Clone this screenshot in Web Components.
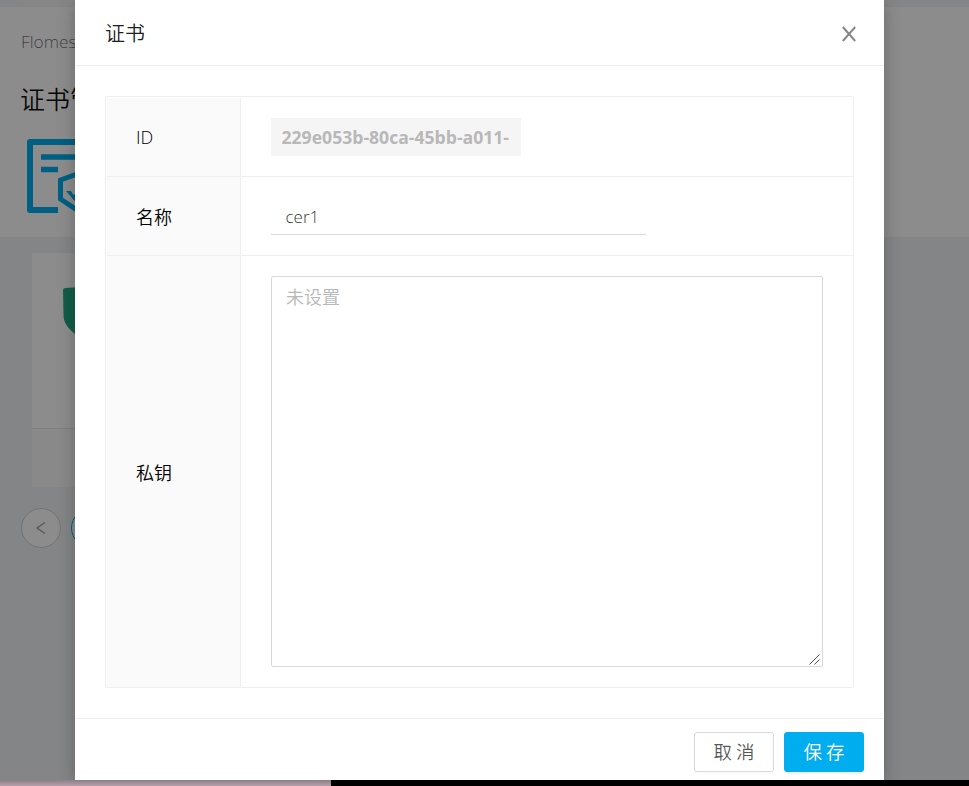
<!DOCTYPE html>
<html lang="zh-CN"><head><meta charset="utf-8"><title>证书</title>
<style>
html,body{margin:0;height:786px;overflow:hidden;background:#000}
body{font-family:"Open Sans","Noto Sans CJK SC",sans-serif;font-weight:350;font-size:18px;color:rgba(0,0,0,.9)}
</style></head><body>
<cert-app></cert-app>
<script>
const define=(name,html,setup)=>customElements.define(name,class extends HTMLElement{
  constructor(){super();this.attachShadow({mode:'open'}).innerHTML='<style>*{box-sizing:border-box}</style>'+html;}
  connectedCallback(){if(setup)setup(this,this.shadowRoot)}
});

define('cert-page',`<style>
:host{display:flex;flex-direction:column;height:780px;background:#f0f2f5;overflow:hidden}
.tabs{height:7px;flex:none;display:flex;padding-left:22px}
.tabs i{display:block;width:60px;height:6px;background:#f5f5f5}
header{height:230px;flex:none;background:#fff;padding:22px 21px 0}
.crumb{height:26px;line-height:26px;font-size:17.300px;color:rgba(0,0,0,.58)}
h1{font-size:25px;font-weight:350;line-height:36px;margin:26px 0 0 -1px;color:rgba(0,0,0,.95);white-space:nowrap}
.logo{display:block;margin:22px 0 0 6px}
main{padding:15px 21px 0 31px}
.card{width:330px;height:236px;background:#fff;border:1px solid #f1f1f1;border-radius:2px;display:flex;flex-direction:column}
.body{height:176px;padding:33px 0 0 31px;border-bottom:1px solid #e8e8e8}
.foot{flex:1;background:#fafafa}
nav{display:flex;gap:10px;margin:20px 0 0 -10px}
nav span{width:40px;height:40px;border:1px solid #d0d0d0;border-radius:50%;background:#fff;display:grid;place-items:center}
nav .on{border-color:#00adef}
svg{display:block}
</style>
<div class="tabs"><i></i></div>
<header><div class="crumb">Flomes</div><h1>证书管理</h1>
<svg class="logo" width="100" height="76" viewBox="0 0 100 76" fill="none" stroke="#00adef" stroke-width="6"><path d="M31 71H3V3H97V30" stroke-linejoin="round"/><path d="M14 18H80M14 30.500H31" stroke-width="5.500"/><path d="M33.500 41L56 33L79 41V60L56 75L33.500 60Z" stroke-width="5"/><path d="M39 52H44L47 57L52 52V57L47 61Z" fill="#00adef" stroke="none"/><path d="M46 60L62 46" stroke-width="5"/></svg></header>
<main><div class="card"><div class="body"><svg width="72" height="72" viewBox="0 0 72 72"><path d="M0 4Q0 2.300 2 2L34 0L68 3V25C68 45 53 58 34 64C11 48 .5 41 .5 29Z" fill="#22aa84"/></svg></div><div class="foot"></div></div>
<nav><span><svg width="12" height="14" viewBox="0 0 12 14" fill="none" stroke="#a0a0a0" stroke-width="1.400"><path d="M10 1.500L2 7L10 12.500"/></svg></span><span class="on"></span></nav></main>`);

define('desktop-strip',`<style>
:host{display:flex;height:6px;background:#000}
div{width:331px;background:linear-gradient(#8d7e86,#b3a0aa)}
</style><div></div>`);

define('form-row',`<style>
:host{display:grid;grid-template-columns:134px 1fr;border-bottom:1px solid #efefef}
:host(:last-child){border-bottom:0}
.label{background:#fafafa;border-right:1px solid #efefef;padding-left:29px;display:flex;align-items:center;font-size:18px;color:#000}
.value{padding:20px 30px;display:flex;align-items:center}
</style><div class="label"><span></span></div><div class="value"><slot></slot></div>`,
(h,r)=>{r.querySelector('span').textContent=h.getAttribute('label')});

define('id-field',`<style>
:host{display:block;width:250px;height:38px;background:#f5f5f5;padding:0 10.500px;font-size:17.600px;font-weight:700;line-height:38px;color:#b8b8b8}
div{overflow:hidden;white-space:nowrap}
</style><div><slot></slot></div>`);

define('text-field',`<style>
:host{display:block;width:375px;height:38px;border-bottom:1px solid #d9d9d9;padding:1px 0 0 14.500px;line-height:38px;font-size:17px;color:rgba(0,0,0,.85)}
</style><slot></slot>`);

define('text-box',`<style>
:host{display:flex;justify-content:space-between;width:552px;height:391px;border:1px solid #d9d9d9;border-radius:2px;padding:7px 2px 1px 14px;line-height:27px;color:#b8b8b8;font-size:18px}
svg{align-self:flex-end}
</style><slot></slot><svg width="11" height="11" viewBox="0 0 11 11" stroke="#555" stroke-width="1"><path d="M.5 10.500L10.500 .5M5.500 10.500L10.500 5.500"/></svg>`);

define('dialog-button',`<style>
:host{display:block;width:80px;height:40px;border:1px solid #d9d9d9;border-radius:3px;background:#fff;color:rgba(0,0,0,.68);box-shadow:0 2px 0 rgba(0,0,0,.016);text-align:center;line-height:38px;font-size:18.500px;letter-spacing:4px;text-indent:4px}
:host([primary]){background:#00adef;border-color:#00adef;color:#fff;box-shadow:0 2px 0 rgba(0,0,0,.045)}
</style><slot></slot>`);

define('modal-dialog',`<style>
:host{display:flex;flex-direction:column;width:809px;height:780px;background:#fff;box-shadow:0 4px 16px rgba(0,0,0,.25)}
header{height:66px;flex:none;border-bottom:1px solid #efefef;display:flex;justify-content:space-between;align-items:center;padding:0 28px 0 30px;font-size:20px}
header svg{margin-top:2px}
main{flex:1;padding:30px}
footer{height:62px;flex:none;border-top:1px solid #efefef;display:flex;justify-content:flex-end;gap:10px;padding:13px 20px 0}
</style><header><slot name="title"></slot><svg width="14" height="16" viewBox="0 0 14 16" stroke="#858585" stroke-width="1.900"><path d="M.8 1L13.200 15M13.200 1L.8 15"/></svg></header><main><slot></slot></main><footer><slot name="actions"></slot></footer>`);

define('form-table',`<style>
:host{display:grid;grid-template-rows:79px 79px 1fr;width:749px;height:592px;border:1px solid #efefef;border-radius:2px;padding:1px 0 0 1px}
</style><slot></slot>`);

define('cert-app',`<style>
:host{display:block;width:969px;height:786px;position:relative;overflow:hidden}
.mask{position:absolute;inset:0 0 6px;background:rgba(0,0,0,.45);display:flex;padding-left:75px;overflow:hidden}
</style><cert-page></cert-page><desktop-strip></desktop-strip>
<div class="mask"><modal-dialog><span slot="title">证书</span>
<form-table><form-row label="ID"><id-field>229e053b-80ca-45bb-a011-</id-field></form-row><form-row label="名称"><text-field>cer1</text-field></form-row><form-row label="私钥"><text-box>未设置</text-box></form-row></form-table>
<dialog-button slot="actions">取消</dialog-button><dialog-button slot="actions" primary>保存</dialog-button></modal-dialog></div>`);
</script></body></html>
